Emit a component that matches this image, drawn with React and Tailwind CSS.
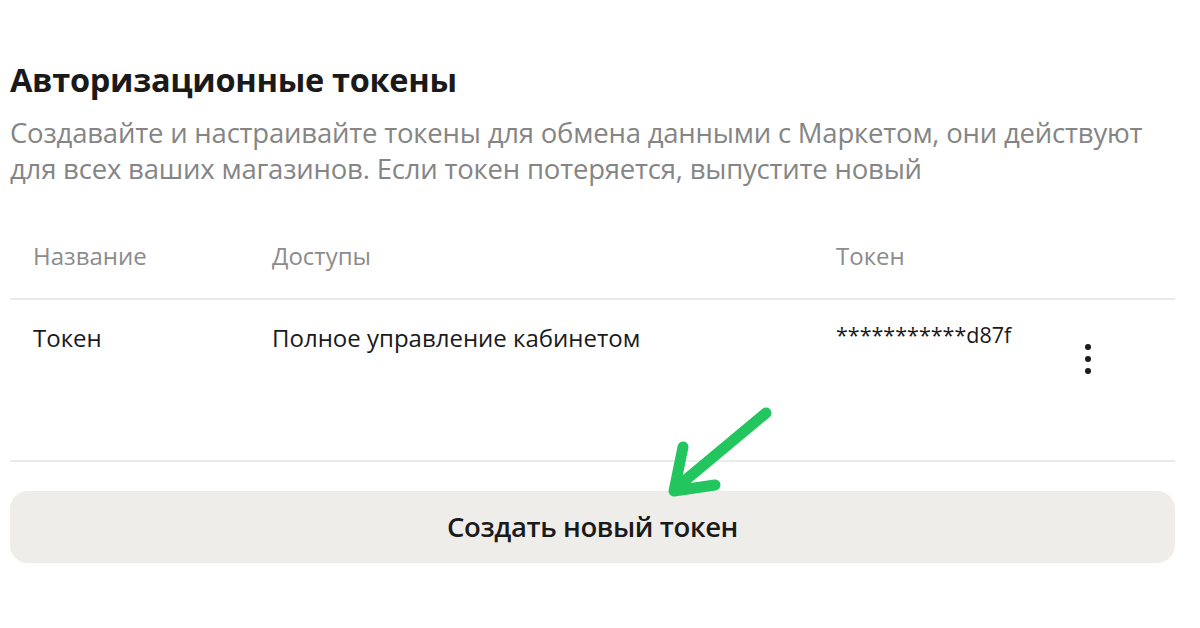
export default function App() {
    return (
        <div className="relative w-[1200px] h-[628px] bg-white overflow-hidden" style={{ fontFamily: '"Open Sans", "Noto Sans", sans-serif' }}>
            <div className="pt-[58px] pl-[10px] pr-[25px]">
                {/* Header */}
                <h1 className="text-[32.5px] leading-[44px] font-bold text-[#1a1a1a] tracking-[-0.3px]">
                    Авторизационные токены
                </h1>
                <p className="mt-[13px] text-[27.5px] leading-[36px] text-[#858585] tracking-[-0.2px] whitespace-nowrap">
                    Создавайте и настраивайте токены для обмена данными с Маркетом, они действуют
                    <br />
                    для всех ваших магазинов. Если токен потеряется, выпустите новый
                </p>

                {/* Table */}
                <div className="mt-[31px]">
                    <div className="flex items-center h-[82px] pb-[4px] pl-[23px] text-[24px] text-[#8c8c8c] border-b-2 border-[#ebebeb]">
                        <div className="w-[239px]">Название</div>
                        <div className="w-[564px]">Доступы</div>
                        <div>Токен</div>
                    </div>
                    <div className="flex items-start h-[162px] pl-[23px] pt-[20px] text-[24px] text-[#1a1a1a] border-b-2 border-[#ebebeb]">
                        <div className="w-[239px]">Токен</div>
                        <div className="w-[564px]">Полное управление кабинетом</div>
                        <div className="w-[240px] -mt-[1px] text-[21.5px]">***********d87f</div>
                        <div className="flex flex-col items-center gap-[6px] mt-[24px] ml-[9px]">
                            <span className="w-[6px] h-[6px] rounded-full bg-[#1a1a1a]" />
                            <span className="w-[6px] h-[6px] rounded-full bg-[#1a1a1a]" />
                            <span className="w-[6px] h-[6px] rounded-full bg-[#1a1a1a]" />
                        </div>
                    </div>
                </div>

                {/* Button */}
                <button className="mt-[29px] w-full h-[72px] rounded-[18px] bg-[#efedea] text-[27.5px] font-semibold text-[#1a1a1a] tracking-[-0.4px]">
                    Создать новый токен
                </button>
            </div>

            {/* Annotation arrow */}
            <svg className="absolute left-0 top-0 pointer-events-none" width="1200" height="628" viewBox="0 0 1200 628">
                <g stroke="#22c55e" strokeWidth="11" strokeLinecap="round" strokeLinejoin="round" fill="none">
                    <path d="M766 413 L676 488" />
                    <path d="M683 447 L674 491 L715 485" />
                </g>
            </svg>
        </div>
    )
}
